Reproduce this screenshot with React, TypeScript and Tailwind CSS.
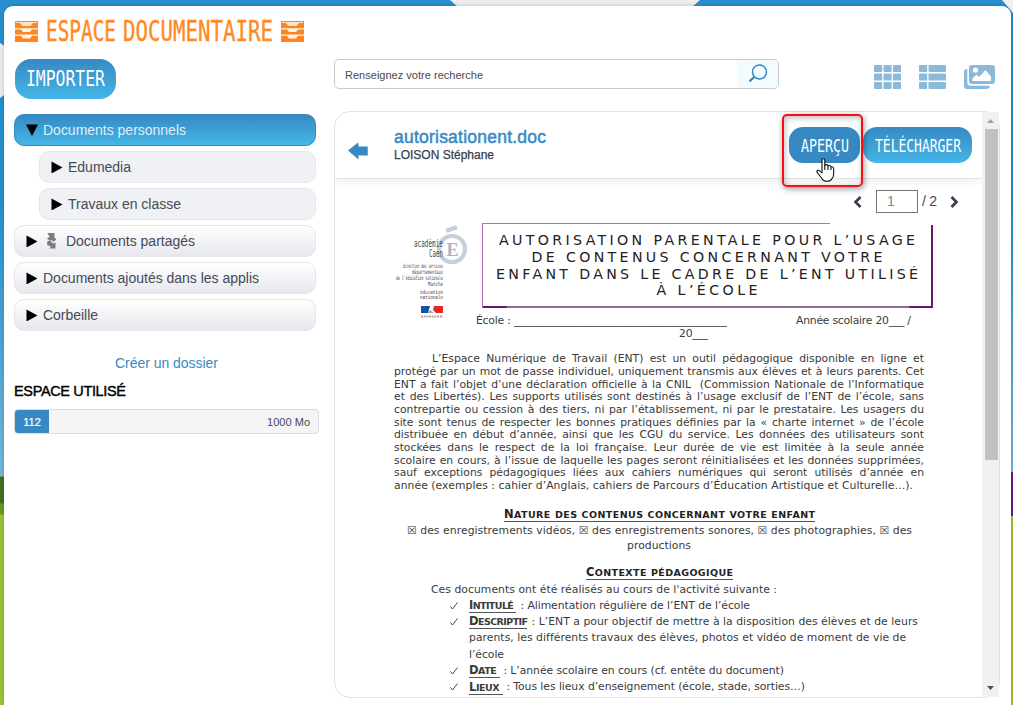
import React, { useLayoutEffect, useRef } from "react";
import type { ReactNode } from "react";

type FitProps = { w: number; children: ReactNode; className?: string; squeeze?: boolean };

/* A line of text tracked (or squeezed) so that it fills exactly w pixels. */
function Fit({ w, children, className = "", squeeze = false }: FitProps) {
  const ref = useRef<HTMLSpanElement>(null);
  useLayoutEffect(() => {
    const el = ref.current;
    if (!el) return;
    el.style.letterSpacing = "0px";
    el.style.transform = "none";
    const natural = el.getBoundingClientRect().width;
    if (squeeze) {
      el.style.transform = `scaleX(${w / natural})`;
    } else {
      const n = (el.textContent || "").length;
      el.style.letterSpacing = `${(w - natural) / Math.max(1, n - 1)}px`;
    }
  }, [w, squeeze]);
  return (
    <span className={`inline-block shrink-0 overflow-visible whitespace-pre text-left ${className}`} style={{ width: w }}>
      <span ref={ref} className="inline-block origin-left whitespace-pre">{children}</span>
    </span>
  );
}

function Drawers() {
  return (
    <svg viewBox="0 0 23 21" className="h-[21px] w-[23px] shrink-0">
      <rect width="23" height="21" rx="0.5" fill="#ff8420" />
      <path d="M1 1H22V2H18L15.5 5H7.5L5 2H1Z" fill="#ffe3ca" />
      <path d="M0 7.2H23V8.4H17L15 11H8L6 8.4H0Z" fill="#fff3e6" />
      <path d="M0 13.6H23V14.8H17L15 17.4H8L6 14.8H0Z" fill="#fff3e6" />
    </svg>
  );
}

function Tri({ down = false }: { down?: boolean }) {
  return (
    <svg viewBox="0 0 12 12" className="h-3 w-3 shrink-0">
      <path d={down ? "M0 0.5H12L6 12Z" : "M0.5 0.5L11.5 6.5L0.5 12.5Z"} fill="#000" />
    </svg>
  );
}

function Folder({ label, w, kind, shared }: { label: string; w: number; kind: "open" | "sub" | "root"; shared?: boolean }) {
  const look =
    kind === "open"
      ? "border-[#3789c3] bg-linear-to-b from-[#3789c3] to-[#45b6e7] text-[#dceefa]"
      : kind === "sub"
        ? "ml-[25px] border-[#e6e7ec] bg-[#f0f1f4] text-[#444a56]"
        : "border-[#e4e6eb] bg-linear-to-b from-white to-[#e7e8ee] text-[#444a56]";
  return (
    <div className={`flex h-8 items-center rounded-[10px] border pl-[11px] text-[14px] ${look}`}>
      <Tri down={kind === "open"} />
      {shared && (
        <svg viewBox="0 0 11 17" className="ml-[8px] h-[17px] w-[11px] shrink-0">
          <path d="M1.5 0H8.5V4.5L10.5 6.5L7 9L6 7L4 8L1 5.5L3.5 4Z" fill="#7b7d80" />
          <path d="M1.5 8L4.5 8L7 10.5L9.5 9.5V15.5H3L5 13.5L1 12Z" fill="#7b7d80" />
        </svg>
      )}
      <Fit w={w} className={shared ? "ml-[9px]" : "ml-[5px]"}>{label}</Fit>
    </div>
  );
}

const hand = "font-['DejaVu_Sans_Mono',monospace]";

const paragraph = [
  "protégé par un mot de passe individuel, uniquement transmis aux élèves et à leurs parents. Cet",
  "ENT a fait l’objet d’une déclaration officielle à la CNIL\u00a0 (Commission Nationale de l’Informatique",
  "et des Libertés). Les supports utilisés sont destinés à l’usage exclusif de l’ENT de l’école, sans",
  "contrepartie ou cession à des tiers, ni par l’établissement, ni par le prestataire. Les usagers du",
  "site sont tenus de respecter les bonnes pratiques définies par la « charte internet » de l’école",
  "distribuée en début d’année, ainsi que les CGU du service. Les données des utilisateurs sont",
  "stockées dans le respect de la loi française. Leur durée de vie est limitée à la seule année",
  "scolaire en cours, à l’issue de laquelle les pages seront réinitialisées et les données supprimées,",
  "sauf exceptions pédagogiques liées aux cahiers numériques qui seront utilisés d’année en",
];

function Caps({ children }: { children: string }) {
  return (
    <span className="border-b border-[#555] font-bold">
      {children.split(" ").map((word, i) => (
        <React.Fragment key={i}>
          {i > 0 && " "}
          <span className={i === 0 ? "text-[11.5px]" : "text-[9.5px]"}>{word.charAt(0)}</span>
          <span className="text-[9.5px]">{word.slice(1)}</span>
        </React.Fragment>
      ))}
    </span>
  );
}

function Item({ cap, w, text, tw }: { cap: string; w: number; text: string; tw: number }) {
  return (
    <div className="flex h-[16.3px] items-center pl-[115px]">
      <svg viewBox="0 0 8 8" className="mr-[11px] h-2 w-2 shrink-0" fill="none" stroke="#444" strokeWidth="1">
        <path d="M0.5 4.5L2.5 7L7.5 0.5" />
      </svg>
      <Fit w={w}><Caps>{cap}</Caps></Fit>
      <Fit w={tw}>{text}</Fit>
    </div>
  );
}

function Doc() {
  return (
    <div className="font-['DejaVu_Sans',sans-serif] text-[10.8px] leading-[12.65px] text-[#3a3a3a]">
      <div className="flex h-[85px] items-start">
        <svg viewBox="0 0 80 100" className="ml-[59px] h-[100px] w-20 shrink-0 overflow-visible font-['DejaVu_Sans_Mono',monospace]">
          <circle cx="58" cy="26" r="13" fill="none" stroke="#c5d0dc" strokeWidth="4.2" />
          <path d="M52 8L63 4" stroke="#c5d0dc" strokeWidth="4" />
          <text x="52.5" y="32.5" fontSize="18" fontWeight="bold" fill="#a9b8c7" className="font-['Liberation_Serif',serif]" textLength="12" lengthAdjust="spacingAndGlyphs">E</text>
          <g fill="#4a4a4a" textAnchor="end">
            <text x="49" y="24" fontSize="10" textLength="29" lengthAdjust="spacingAndGlyphs">académie</text>
            <text x="49" y="34" fontSize="10" textLength="14" lengthAdjust="spacingAndGlyphs">Caen</text>
            <text x="49" y="45" fontSize="6" textLength="40" lengthAdjust="spacingAndGlyphs">direction des services</text>
            <text x="49" y="51" fontSize="6" textLength="31" lengthAdjust="spacingAndGlyphs">départementaux</text>
            <text x="49" y="57" fontSize="6" textLength="47" lengthAdjust="spacingAndGlyphs">de l’éducation nationale</text>
            <text x="49" y="63" fontSize="6" textLength="15" lengthAdjust="spacingAndGlyphs">Manche</text>
            <text x="49" y="71" fontSize="5.5" textLength="23" lengthAdjust="spacingAndGlyphs">éducation</text>
            <text x="49" y="76" fontSize="5.5" textLength="23" lengthAdjust="spacingAndGlyphs">nationale</text>
          </g>
          <path d="M27 83H36L34 90H27Z" fill="#174fa2" />
          <path d="M40 83H49V90H42L39 87Z" fill="#e5252c" />
          <path d="M34 90L36 87L40 90Z" fill="#9aa3ad" />
          <path d="M27 93.5H49" stroke="#aaa" strokeWidth="2" strokeDasharray="2 0.7" />
        </svg>
        <div className="relative ml-[8px] flex h-[85px] w-[451px] flex-col items-center border-b-2 border-l border-b-[#8d6b91] border-l-[#bd67bd] pt-[9px] pr-[2px] text-[14.2px] leading-[16.8px] text-[#222]">
          <Fit w={416}>AUTORISATION PARENTALE POUR L’USAGE</Fit>
          <Fit w={351}>DE CONTENUS CONCERNANT VOTRE</Fit>
          <Fit w={422}>ENFANT DANS LE CADRE DE L’ENT UTILISÉ</Fit>
          <Fit w={101}>À L’ÉCOLE</Fit>
          <span className="absolute top-0 left-0 h-px w-[347px] bg-[#bd67bd]" />
          <span className="absolute top-[2px] right-0 h-[82px] w-[2px] bg-[#6d1670]" />
          <span className="absolute right-0 -bottom-[2px] h-[2px] w-6 bg-[#6d1670]" />
          <span className="absolute -bottom-[2px] left-0 h-[2px] w-6 bg-[#6d1670]" />
        </div>
      </div>
      <div className="mt-[7px] flex pl-[141px]">
        <Fit w={251}>École : _________________________________________</Fit>
        <Fit w={115} className="ml-[69px]">Année scolaire 20___ /</Fit>
      </div>
      <div className="pl-[344px]"><Fit w={29}>20___</Fit></div>
      <div className="mt-[13px] ml-[59px] w-[530px]">
        <div className="pl-[38px] whitespace-nowrap [text-align-last:justify]">L’Espace Numérique de Travail (ENT) est un outil pédagogique disponible en ligne et</div>
        {paragraph.map((line) => (
          <div key={line} className="whitespace-nowrap [text-align-last:justify]">{line}</div>
        ))}
        <Fit w={519}>année (exemples : cahier d’Anglais, cahiers de Parcours d’Éducation Artistique et Culturelle…).</Fit>
      </div>
      <div className="mt-[15px] pl-[169px] text-[#222]"><Fit w={311}><Caps>NATURE DES CONTENUS CONCERNANT VOTRE ENFANT</Caps></Fit></div>
      <div className="mt-[4px] pl-[72px]"><Fit w={505}>☒ des enregistrements vidéos, ☒ des enregistrements sonores, ☒ des photographies, ☒ des</Fit></div>
      <div className="mt-[2px] pl-[292px]"><Fit w={64}>productions</Fit></div>
      <div className="mt-[13px] pl-[251px] text-[#222]"><Fit w={147}><Caps>CONTEXTE PÉDAGOGIQUE</Caps></Fit></div>
      <div className="mt-[5px] mb-[1px] pl-[96px]"><Fit w={346}>Ces documents ont été réalisés au cours de l'activité suivante :</Fit></div>
      <Item cap="INTITULÉ " w={48} text=" : Alimentation régulière de l’ENT de l’école" tw={233} />
      <Item cap="DESCRIPTIF" w={59} text=" : L’ENT a pour objectif de mettre à la disposition des élèves et de leurs" tw={390} />
      <div className="flex h-[16.3px] items-center pl-[134px]"><Fit w={437}>parents, les différents travaux des élèves, photos et vidéo de moment de vie de</Fit></div>
      <div className="flex h-[16.3px] items-center pl-[134px]"><Fit w={35}>l’école</Fit></div>
      <Item cap="DATE " w={31} text=" : L’année scolaire en cours (cf. entête du document)" tw={284} />
      <Item cap="LIEUX " w={34} text=" : Tous les lieux d’enseignement (école, stade, sorties…)" tw={302} />
    </div>
  );
}

export default function App() {
  return (
    <div className="relative h-[705px] w-[1013px] overflow-hidden bg-[linear-gradient(#278fd0_0,#2391cf_200px,#75b6dc_476px,#436f1d_477px,#436f1d_503px,#5d9d2c_504px,#5d9d2c_514px,#9bc436_515px)] font-['Liberation_Sans',Arial,sans-serif]">
      <svg viewBox="0 0 1013 705" className="absolute inset-0 h-[705px] w-[1013px]">
        <path d="M450 0H700L692 7H458Z" fill="#ededed" />
        <path d="M0 43L8 48V92L0 98Z" fill="#ededed" />
        <path d="M1002 0H1013V13Z" fill="#f2f2f2" />
        <path d="M1011 472H1013V516H1011Z" fill="#74158d" />
      </svg>
      <div className="relative mt-[6px] ml-1 h-[699px] w-[1007px] rounded-t-[9px] bg-white px-[10px] pt-[13px] shadow-[0_0_4px_#0003]">
        <h1 className="flex h-[24px] items-center gap-[8px] pl-px text-[#ff8a24]">
          <Drawers />
          <span className={`flex items-center text-[27.5px] leading-6 [-webkit-text-stroke:0.4px_#ff8a24] ${hand}`}>
            <Fit w={70} squeeze>ESPACE</Fit>
            <Fit w={150} squeeze className="ml-[7px]">DOCUMENTAIRE</Fit>
          </span>
          <Drawers />
        </h1>
        <div className="mt-[16px] flex h-[40px]">
          <button className={`ml-px flex h-10 w-[101px] items-center justify-center rounded-[16px] bg-linear-to-b from-[#3789c3] to-[#45b6e7] pt-px text-[21px] text-white ${hand}`}>
            <Fit w={79} squeeze>IMPORTER</Fit>
          </button>
          <div className="ml-[218px] flex h-[30px] w-[445px] overflow-hidden rounded-[5px] border border-[#c5cbd5]">
            <div className="flex flex-1 items-center pt-[2px] pl-[10px] text-[11px] text-[#4a4a4a]"><Fit w={138}>Renseignez votre recherche</Fit></div>
            <div className="flex w-[41px] items-center justify-center bg-[#f4fbff]">
              <svg viewBox="0 0 20 20" className="h-5 w-5" fill="none" stroke="#3789c3" strokeWidth="1.5">
                <circle cx="11.5" cy="8" r="7" />
                <path d="M6.5 12.8L1.5 17.4" strokeWidth="2.2" />
              </svg>
            </div>
          </div>
          <div className="ml-[95px] flex gap-[18px] pt-[6px]">
            <svg viewBox="0 0 27 24" className="h-6 w-[27px]" fill="#8bb9db">
              {[0, 8.5, 17].map((y) => [0, 9.5, 19].map((x) => <rect key={`${x}-${y}`} x={x} y={y} width="8.2" height="7" rx="1" />))}
            </svg>
            <svg viewBox="0 0 27 24" className="h-6 w-[27px]" fill="#8bb9db">
              {[0, 8.5, 17].map((y) => (
                <g key={y}><rect y={y} width="8.2" height="7" rx="1" /><rect x="9.5" y={y} width="17.5" height="7" rx="1" /></g>
              ))}
            </svg>
            <svg viewBox="0 0 31 24" className="h-6 w-[31px]" fill="#8bb9db">
              <path fillRule="evenodd" d="M8 0H28Q31 0 31 3V16Q31 19 28 19H8Q5 19 5 16V3Q5 0 8 0ZM8.5 16H27V11.5L21.5 5L15 12L12.5 9.5L8.5 13.5ZM11.5 2.5A2.6 2.6 0 1 0 11.5 7.7A2.6 2.6 0 1 0 11.5 2.5Z" />
              <path d="M3.3 4V17Q3.3 20.8 7 20.8H26Q25.5 24 22.5 24H3Q0 24 0 21V7Q0 4.3 3.3 4Z" />
            </svg>
          </div>
        </div>
        <div className="mt-[12px] flex">
          <aside className="mt-[3px] flex w-[302px] flex-col gap-[5px]">
            <Folder kind="open" label="Documents personnels" w={143} />
            <Folder kind="sub" label="Edumedia" w={63} />
            <Folder kind="sub" label="Travaux en classe" w={113} />
            <Folder kind="root" label="Documents partagés" w={129} shared />
            <Folder kind="root" label="Documents ajoutés dans les applis" w={216} />
            <Folder kind="root" label="Corbeille" w={55} />
            <div className="mt-[17px] ml-[101px] text-[14px] leading-[20px] text-[#3789c3]"><Fit w={103}>Créer un dossier</Fit></div>
            <div className="mt-[3px] text-[14.5px] leading-[20px] text-black [-webkit-text-stroke:0.4px_#000]"><Fit w={112}>ESPACE UTILISÉ</Fit></div>
            <div className="mt-[3px] flex h-[25px] w-[305px] overflow-hidden rounded-[4px] border border-[#dcdcdc] bg-[#f5f5f5] pt-0 text-[11px]">
              <div className="flex w-[34px] items-center justify-center bg-[#3789c3] pt-[2px] text-white [-webkit-text-stroke:0.2px_#fff]">112</div>
              <div className="flex flex-1 items-center justify-end pt-[2px] pr-[8px] text-[#444a56]"><Fit w={43}>1000 Mo</Fit></div>
            </div>
          </aside>
          <main className="relative ml-[18px] flex h-[587px] w-[666px] rounded-[16px] border border-[#e1e2e4]">
            <div className="w-[648px] overflow-hidden rounded-l-[15px]">
              <header className="relative flex h-[67px] border-b border-[#e1e2e4] shadow-[0_2px_10px_#00000014]">
                <svg viewBox="0 0 20 18" className="mt-[30px] ml-[13px] h-[18px] w-5 shrink-0">
                  <path d="M1 9L11 1V5H20.5V14H11V18Z" fill="#b8bec5" />
                  <path d="M0 8.5L10 0.5V4.5H19.5V13H10V17Z" fill="#3789c3" />
                </svg>
                <div className="mt-[15px] ml-[26px] w-[395px]">
                  <div className="flex h-[20px] items-center text-[17.5px] leading-5 text-[#3789c3] [-webkit-text-stroke:0.5px_#3789c3]"><Fit w={152}>autorisationent.doc</Fit></div>
                  <div className="flex h-[16px] items-center text-[12px] leading-4 text-[#38404d] [-webkit-text-stroke:0.25px_#38404d]"><Fit w={100}>LOISON Stéphane</Fit></div>
                </div>
                <div className={`mt-[15px] flex h-9 gap-[3px] text-[17.5px] text-white ${hand}`}>
                  <button className="flex w-[71px] items-center justify-center rounded-[14px] bg-[#3789c3] pt-[2px]"><Fit w={48} squeeze>APERÇU</Fit></button>
                  <button className="flex w-[109px] items-center justify-center rounded-[14px] bg-linear-to-b from-[#3789c3] to-[#45b6e7] pt-[2px]"><Fit w={86} squeeze>TÉLÉCHARGER</Fit></button>
                </div>
              </header>
              <div className="flex h-[44px] items-center pl-[518px] text-[14px] text-[#444a56]">
                <svg viewBox="0 0 9 12" className="mt-px h-3 w-[9px]" fill="none" stroke="#38404d" strokeWidth="2.7"><path d="M7.5 1L2.5 6L7.5 11" /></svg>
                <div className="ml-[14px] flex h-[23px] w-[42px] items-center border border-[#767676] pl-[10px] text-[#858585]">1</div>
                <Fit w={15} className="ml-[4px]">/ 2</Fit>
                <svg viewBox="0 0 9 12" className="mt-px ml-[13px] h-3 w-[9px]" fill="none" stroke="#38404d" strokeWidth="2.7"><path d="M1.5 1L6.5 6L1.5 11" /></svg>
              </div>
              <Doc />
            </div>
            <div className="flex h-[585px] w-[17px] flex-col items-center bg-[#f1f1f1]">
              <svg viewBox="0 0 17 17" className="h-[17px] w-[17px]"><path d="M5 11L8.5 7L12 11Z" fill="#a3a3a3" /></svg>
              <div className="ml-px h-[331px] w-[13px] bg-[#c1c1c1]" />
              <svg viewBox="0 0 17 17" className="mt-auto h-[17px] w-[17px]"><path d="M5 6H12L8.5 10Z" fill="#505050" /></svg>
            </div>
          </main>
        </div>
      </div>
      <div className="absolute top-[114px] left-[782px] h-[73px] w-[81px] rounded-[5px] border-2 border-[#f50f18] shadow-[1px_2px_6px_#0006,inset_1px_2px_6px_#0004]" />
      <svg viewBox="0 0 19 24" className="absolute top-[158px] left-[816px] h-6 w-[19px]" fill="#fff" stroke="#111" strokeWidth="1.1" strokeLinejoin="round">
        <path d="M6 14V2Q6 0.7 7.4 0.7Q8.8 0.7 8.8 2V7.2Q11.6 5.7 12 8Q14.6 6.8 15 9Q17.5 8.3 17.7 11V16Q17.7 19 15.6 21Q14.5 23.3 11.2 23.3Q7 23.3 5.5 20L1 14.2Q.4 12.7 2 12.3Q3.5 12 6 15Z" />
        <path d="M8.8 7V12M12 8V12M15 9.3V12" fill="none" />
      </svg>
    </div>
  );
}
